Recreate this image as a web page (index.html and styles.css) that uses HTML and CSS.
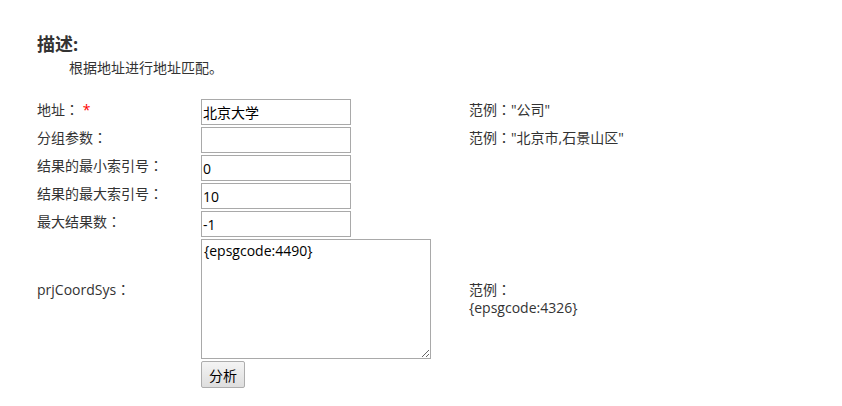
FILE: index.html
```html
<html>

<head>
    <title>地址匹配</title>
    <link rel="stylesheet" href="styles.css">
</head>

<body>
    <div class="page">
        <div class="desc_title">描述:</div>
        <div class="desc_text">根据地址进行地址匹配。</div>

        <div class="form_grid">
            <div class="label">地址<span class="colon" lang="ja">：</span> <span class="required">*</span></div>
            <div class="field"><input type="text" class="text_input" value="北京大学"></div>
            <div class="example">范例<span class="colon" lang="ja">：</span>"公司"</div>

            <div class="label">分组参数<span class="colon" lang="ja">：</span></div>
            <div class="field"><input type="text" class="text_input" value=""></div>
            <div class="example">范例<span class="colon" lang="ja">：</span>"北京市,石景山区"</div>

            <div class="label">结果的最小索引号<span class="colon" lang="ja">：</span></div>
            <div class="field"><input type="text" class="text_input" value="0"></div>
            <div class="example"></div>

            <div class="label">结果的最大索引号<span class="colon" lang="ja">：</span></div>
            <div class="field"><input type="text" class="text_input" value="10"></div>
            <div class="example"></div>

            <div class="label">最大结果数<span class="colon" lang="ja">：</span></div>
            <div class="field"><input type="text" class="text_input" value="-1"></div>
            <div class="example"></div>

            <div class="label label_area">prjCoordSys<span class="colon" lang="ja">：</span></div>
            <div class="field"><textarea class="text_area">{epsgcode:4490}</textarea></div>
            <div class="example example_area">范例<span class="colon" lang="ja">：</span><br>{epsgcode:4326}</div>

            <div class="label"></div>
            <div class="field"><button class="button">分析</button></div>
            <div class="example"></div>
        </div>
    </div>
</body>

</html>
```

FILE: styles.css
```css
body {
    margin: 0;
    background-color: #ffffff;
    color: #333333;
    font-family: "Open Sans", "Noto Sans CJK SC", sans-serif;
    font-size: 14px;
}

.page {
    padding: 33px 0 0 37px;
}

.desc_title {
    font-size: 18px;
    font-weight: bold;
    line-height: 22px;
}

.desc_text {
    padding-left: 32px;
    line-height: 18px;
    margin-top: 4px;
}

.form_grid {
    display: grid;
    grid-template-columns: 164px 268px auto;
    grid-template-rows: 26px 26px 26px 26px 26px 120px 27px;
    row-gap: 2px;
    margin-top: 22px;
}

.label,
.example {
    line-height: 18px;
    padding-top: 1px;
}

/* full-width colon centred in its cell, as in the original font */
.colon {
    font-family: "Noto Sans CJK JP", sans-serif;
}

.required {
    color: #ff0000;
}

.label_area {
    padding-top: 41px;
}

.example_area {
    padding-top: 41px;
}

.text_input {
    box-sizing: border-box;
    width: 150px;
    height: 26px;
    margin: 0;
    padding: 0 1px;
    border: 1px solid #a9a9a9;
    font-family: "Open Sans", "Noto Sans CJK SC", sans-serif;
    font-size: 14px;
    color: #000000;
    outline: none;
}

.text_area {
    box-sizing: border-box;
    display: block;
    width: 230px;
    height: 120px;
    margin: 0;
    padding: 2px;
    border: 1px solid #a9a9a9;
    font-family: "Open Sans", "Noto Sans CJK SC", sans-serif;
    font-size: 14px;
    line-height: 18px;
    color: #000000;
}

.button {
    box-sizing: border-box;
    width: 44px;
    height: 27px;
    margin: 0;
    padding: 0;
    border: 1px solid #adadad;
    border-radius: 2px;
    background: linear-gradient(#f4f4f4, #dedede);
    font-family: "Open Sans", "Noto Sans CJK SC", sans-serif;
    font-size: 14px;
    color: #000000;
}
```
